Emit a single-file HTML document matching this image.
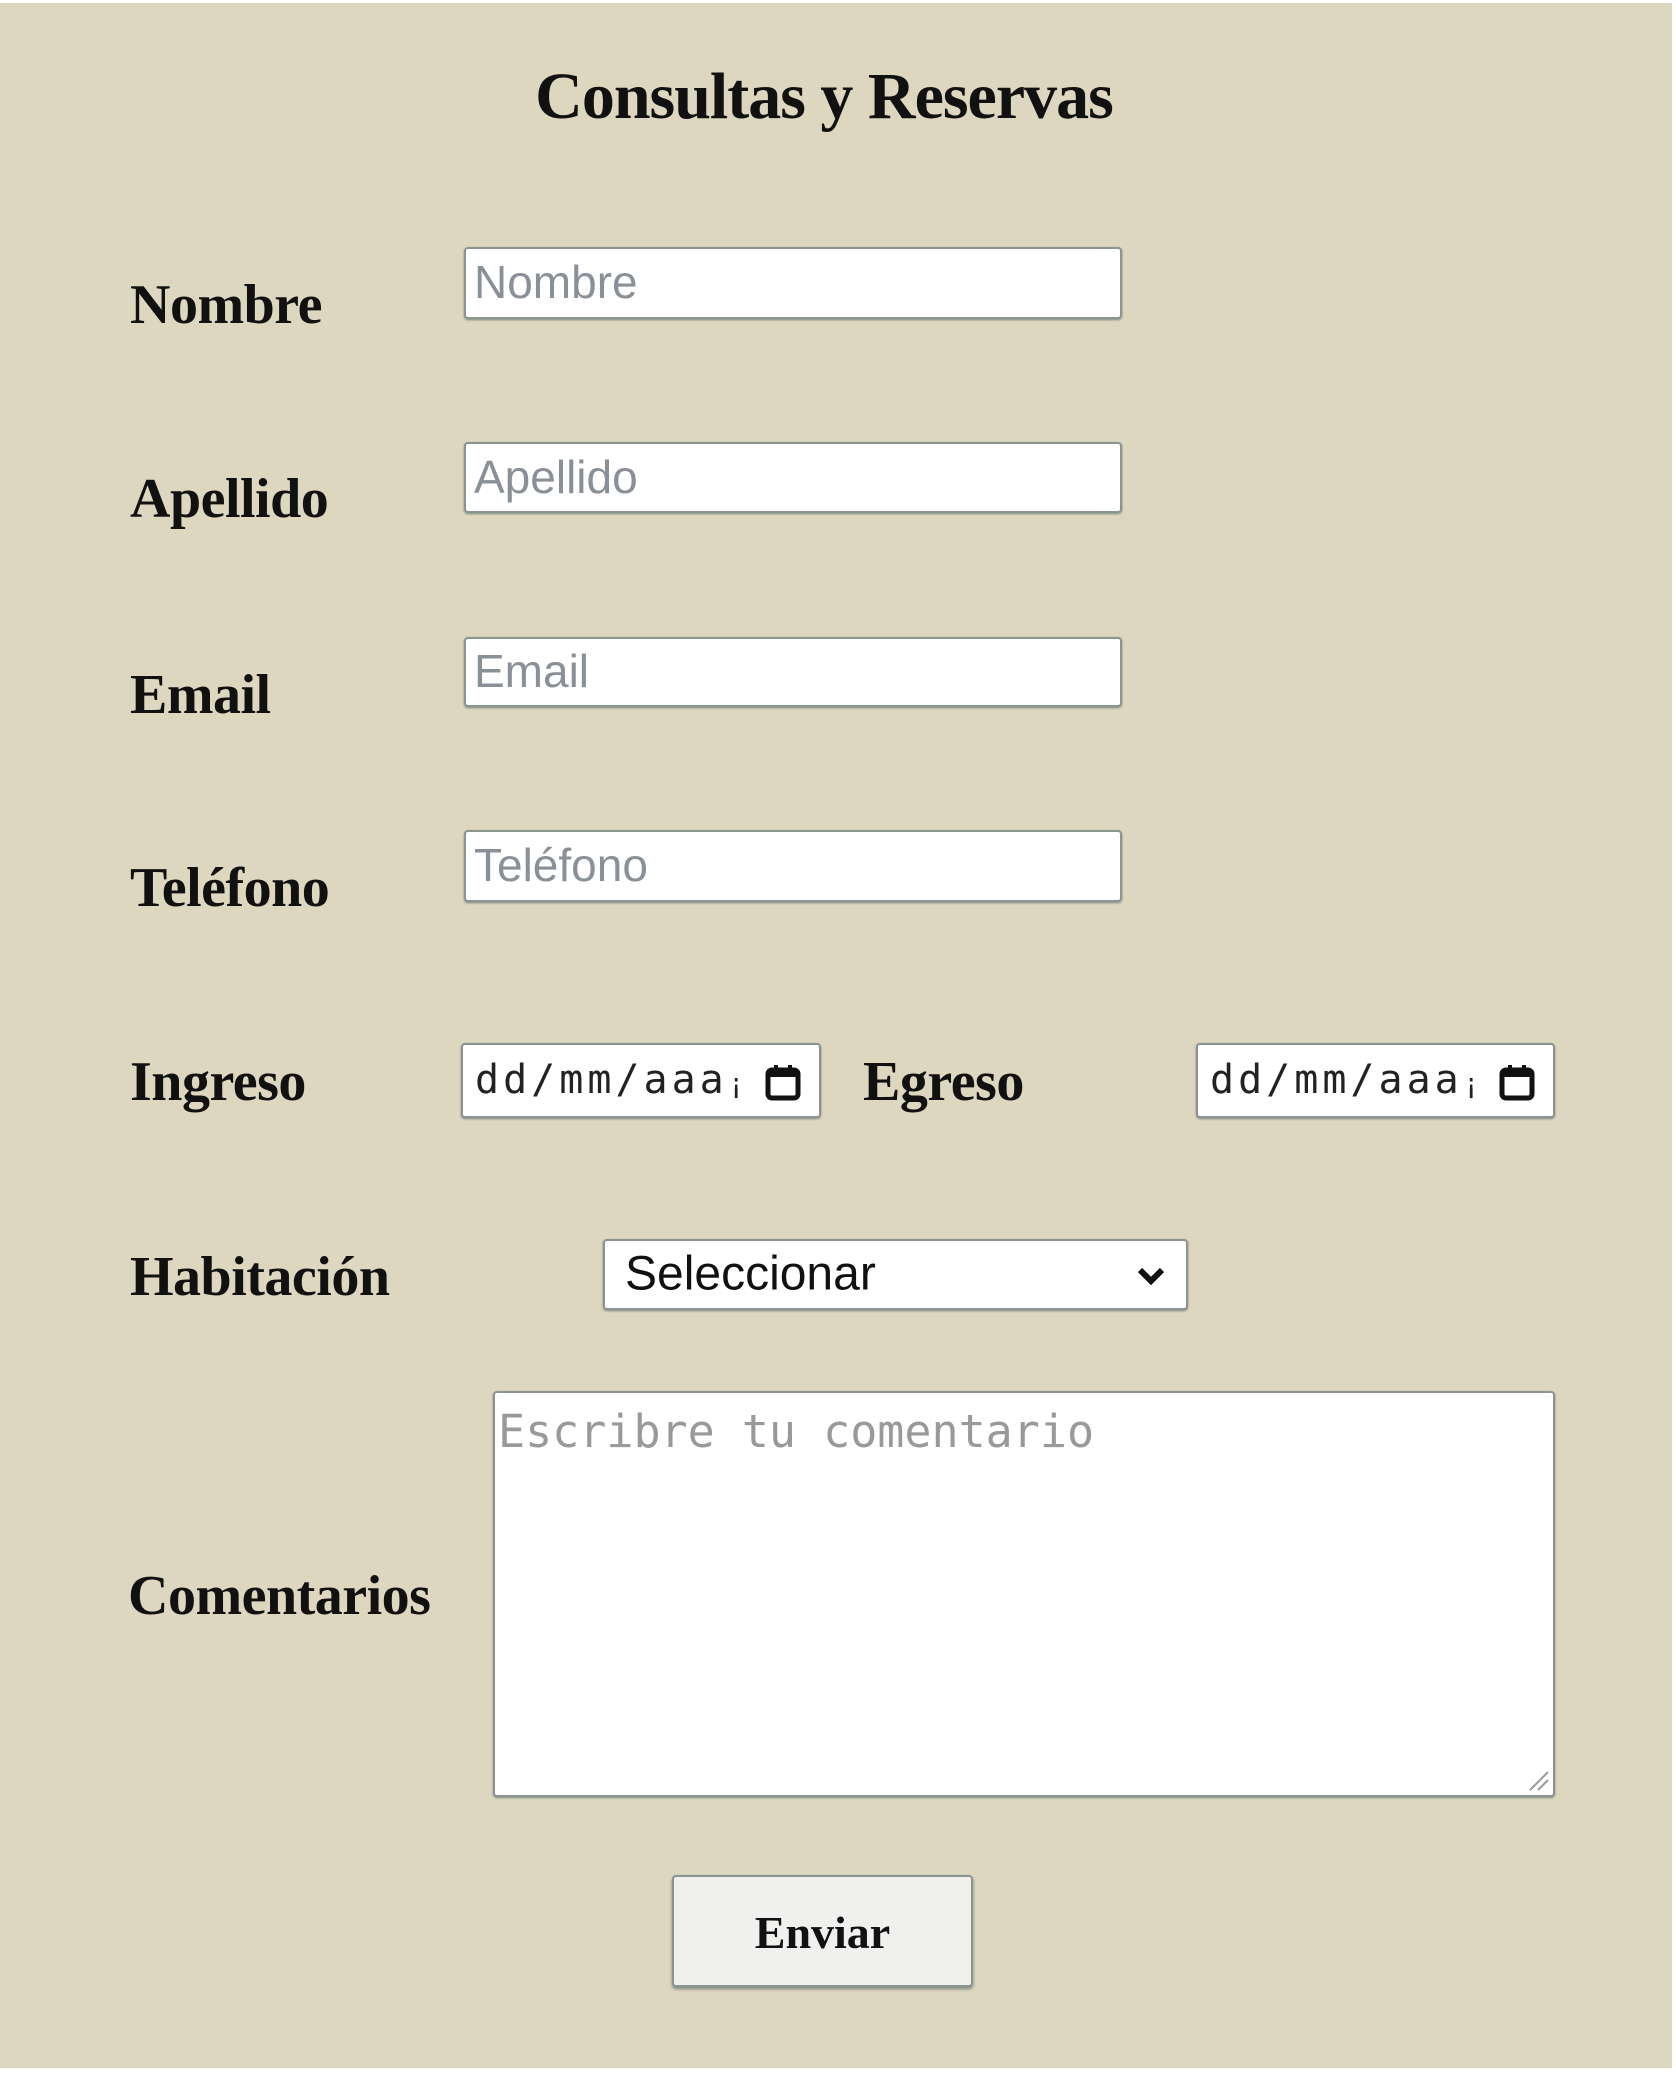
<!DOCTYPE html>
<html><head><meta charset="utf-8"><style>
html,body{margin:0;padding:0;background:#fff;}
body{width:1676px;height:2074px;position:relative;overflow:hidden;}
#bg{position:absolute;left:0;top:3px;width:1672px;height:2065px;background:#ded7c0;}
.t{position:absolute;font-family:"Liberation Serif",serif;color:#111;white-space:nowrap;}
.lab{font-size:56px;font-weight:bold;line-height:1;letter-spacing:-0.5px;}
.in{position:absolute;background:#fff;border:2px solid #8a9590;border-radius:4px;box-sizing:border-box;box-shadow:0 1px 2px #7a8580;font-family:"Liberation Sans",sans-serif;color:#8a9098;font-size:46px;}
.in span{position:absolute;left:8px;top:50%;transform:translateY(-52%);}
.mono{font-family:"DejaVu Sans Mono","Liberation Mono",monospace;}
</style></head><body>
<div id="bg"></div>
<div class="t" style="left:0;width:1648px;text-align:center;top:64px;font-size:66px;font-weight:bold;letter-spacing:-1px;line-height:1;">Consultas y Reservas</div>

<div class="t lab" style="left:130px;top:277px;">Nombre</div>
<div class="in" style="left:464px;top:247px;width:658px;height:72px;"><span>Nombre</span></div>

<div class="t lab" style="left:130px;top:471px;">Apellido</div>
<div class="in" style="left:464px;top:442px;width:658px;height:71px;"><span>Apellido</span></div>

<div class="t lab" style="left:130px;top:667px;">Email</div>
<div class="in" style="left:464px;top:637px;width:658px;height:70px;"><span>Email</span></div>

<div class="t lab" style="left:130px;top:860px;">Teléfono</div>
<div class="in" style="left:464px;top:830px;width:658px;height:72px;"><span>Teléfono</span></div>

<div class="t lab" style="left:130px;top:1054px;">Ingreso</div>
<div class="in mono" style="left:461px;top:1043px;width:360px;height:75px;color:#222;font-size:40px;"><span class="mono" style="left:12px;letter-spacing:4px;">dd/mm/aaa<span style="position:static;font-size:28px">¡</span></span>
<svg style="position:absolute;right:16px;top:17px" width="40" height="40" viewBox="0 0 40 40"><rect x="5" y="8" width="30" height="28" rx="4" fill="none" stroke="#111" stroke-width="5"/><rect x="5" y="8" width="30" height="7" fill="#111"/><rect x="11" y="3" width="4" height="8" fill="#111"/><rect x="25" y="3" width="4" height="8" fill="#111"/></svg></div>

<div class="t lab" style="left:863px;top:1054px;">Egreso</div>
<div class="in mono" style="left:1196px;top:1043px;width:359px;height:75px;color:#222;font-size:40px;"><span class="mono" style="left:12px;letter-spacing:4px;">dd/mm/aaa<span style="position:static;font-size:28px">¡</span></span>
<svg style="position:absolute;right:16px;top:17px" width="40" height="40" viewBox="0 0 40 40"><rect x="5" y="8" width="30" height="28" rx="4" fill="none" stroke="#111" stroke-width="5"/><rect x="5" y="8" width="30" height="7" fill="#111"/><rect x="11" y="3" width="4" height="8" fill="#111"/><rect x="25" y="3" width="4" height="8" fill="#111"/></svg></div>

<div class="t lab" style="left:130px;top:1249px;">Habitación</div>
<div class="in" style="left:603px;top:1239px;width:585px;height:71px;color:#111;font-size:48px;"><span style="left:20px;">Seleccionar</span>
<svg style="position:absolute;right:20px;top:24px" width="30" height="22" viewBox="0 0 30 22"><path d="M4 5 L15 16 L26 5" fill="none" stroke="#111" stroke-width="6"/></svg></div>

<div class="t lab" style="left:128px;top:1568px;">Comentarios</div>
<div class="in mono" style="left:493px;top:1391px;width:1062px;height:406px;"><span class="mono" style="top:12px;left:3px;transform:none;font-size:45px;color:#999;">Escribre tu comentario</span>
<svg style="position:absolute;right:3px;bottom:3px" width="26" height="26"><path d="M24 6 L6 24 M24 14 L14 24" stroke="#999" stroke-width="2"/></svg></div>

<div style="position:absolute;left:672px;top:1875px;width:301px;height:112px;background:#f0f0ee;border:2px solid #8a9590;border-radius:4px;box-sizing:border-box;box-shadow:0 2px 3px #7a8580;"></div>
<div class="t" style="left:672px;width:301px;text-align:center;top:1910px;font-size:46px;font-weight:bold;line-height:1;">Enviar</div>
</body></html>
